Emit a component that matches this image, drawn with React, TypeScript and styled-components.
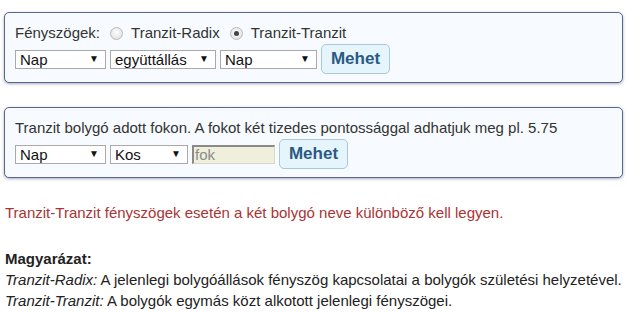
import styled, { createGlobalStyle } from "styled-components";

const GlobalStyle = createGlobalStyle`
  html, body {
    margin: 0;
    padding: 0;
    background: #ffffff;
  }
  body {
    font-family: "Liberation Sans", Arial, sans-serif;
    font-size: 15px;
    color: #222;
  }
`;

const Page = styled.div`
  width: 628px;
  padding: 12px 5px 0 4px;
  box-sizing: border-box;
`;

const Panel = styled.form`
  background: #f7fbff;
  border: 1px solid #5a6590;
  border-radius: 5px;
  box-shadow: 0 1px 3px rgba(60, 70, 120, 0.45);
  padding: 10px 10px 8px 10px;
  margin: 0 0 24px 0;
  display: flex;
  flex-direction: column;
  gap: 1px;
  font-size: 15px;
  color: #333;
`;

const TopLine = styled.div`
  display: flex;
  align-items: center;
  height: 20px;
  line-height: 20px;
  white-space: nowrap;
`;

const RadioLabel = styled.label`
  display: flex;
  align-items: center;
  margin-left: 10px;
`;

const Radio = styled.span<{ $checked?: boolean }>`
  width: 11px;
  height: 11px;
  border-radius: 50%;
  border: 1px solid #b8b8b8;
  background: radial-gradient(circle at 50% 40%, #fdfdfd 0%, #dcdcdc 100%);
  margin-right: 8px;
  display: flex;
  align-items: center;
  justify-content: center;
  &::after {
    content: "";
    width: 5px;
    height: 5px;
    border-radius: 50%;
    background: ${(p) => (p.$checked ? "#444" : "transparent")};
  }
`;

const Controls = styled.div`
  display: flex;
  align-items: center;
  gap: 4px;
  height: 30px;
`;

const SelectWrap = styled.div<{ $w: number }>`
  position: relative;
  width: ${(p) => p.$w}px;
  height: 19px;
`;

const Select = styled.select`
  appearance: none;
  -webkit-appearance: none;
  width: 100%;
  height: 100%;
  box-sizing: border-box;
  border: 1px solid #a9a9a9;
  background: #fff;
  font-family: "Liberation Sans", Arial, sans-serif;
  font-size: 15px;
  line-height: 17px;
  color: #111;
  padding: 0 0 0 4px;
  margin: 0;
  border-radius: 0;
  outline: none;
`;

const Arrow = styled.span`
  position: absolute;
  right: 7px;
  top: 3px;
  font-size: 10px;
  line-height: 12px;
  color: #111;
  pointer-events: none;
`;

const FokInput = styled.input`
  width: 83px;
  height: 19px;
  box-sizing: border-box;
  border: 1px solid #d8d8c8;
  border-top: 2px solid #8a8a8a;
  border-left: 2px solid #8a8a8a;
  background: #efefdc;
  font-family: "Liberation Sans", Arial, sans-serif;
  font-size: 15px;
  padding: 0 1px;
  margin: 0;
  &::placeholder {
    color: #8a8a8a;
  }
`;

const Button = styled.button`
  height: 30px;
  width: 69px;
  border: 1px solid #a6c9dc;
  border-radius: 5px;
  background: #e6f4fb;
  color: #2a5a85;
  font-family: "Liberation Sans", Arial, sans-serif;
  font-weight: bold;
  font-size: 17px;
  padding: 0;
`;

const ErrorText = styled.p`
  margin: 0 0 0 1px;
  color: #a93434;
  font-size: 15px;
  line-height: 21px;
  padding-top: 0;
`;

const Explain = styled.div`
  margin: 25px 0 0 1px;
  font-size: 15px;
  line-height: 21px;
  color: #222;
`;

const ExplainTitle = styled.div`
  font-weight: bold;
`;

const Term = styled.i``;

type SelProps = { w: number; value: string; options: string[] };

const Sel = ({ w, value, options }: SelProps) => (
  <SelectWrap $w={w}>
    <Select defaultValue={value}>
      {options.map((o) => (
        <option key={o}>{o}</option>
      ))}
    </Select>
    <Arrow>▼</Arrow>
  </SelectWrap>
);

const planets = ["Nap", "Hold", "Merkúr", "Vénusz", "Mars", "Jupiter", "Szaturnusz", "Uránusz", "Neptunusz", "Plútó"];
const aspects = ["együttállás", "szembenállás", "trigon", "kvadrát", "szextil"];
const signs = ["Kos", "Bika", "Ikrek", "Rák", "Oroszlán", "Szűz", "Mérleg", "Skorpió", "Nyilas", "Bak", "Vízöntő", "Halak"];

export default function App() {
  return (
    <Page>
      <GlobalStyle />
      <Panel>
        <TopLine>
          Fényszögek:
          <RadioLabel>
            <Radio />
            Tranzit-Radix
          </RadioLabel>
          <RadioLabel>
            <Radio $checked />
            Tranzit-Tranzit
          </RadioLabel>
        </TopLine>
        <Controls>
          <Sel w={91} value="Nap" options={planets} />
          <Sel w={106} value="együttállás" options={aspects} />
          <Sel w={97} value="Nap" options={planets} />
          <Button type="button">Mehet</Button>
        </Controls>
      </Panel>
      <Panel>
        <TopLine>Tranzit bolygó adott fokon. A fokot két tizedes pontossággal adhatjuk meg pl. 5.75</TopLine>
        <Controls>
          <Sel w={91} value="Nap" options={planets} />
          <Sel w={78} value="Kos" options={signs} />
          <FokInput placeholder="fok" />
          <Button type="button">Mehet</Button>
        </Controls>
      </Panel>
      <ErrorText>Tranzit-Tranzit fényszögek esetén a két bolygó neve különböző kell legyen.</ErrorText>
      <Explain>
        <ExplainTitle>Magyarázat:</ExplainTitle>
        <div>
          <Term>Tranzit-Radix:</Term> A jelenlegi bolygóállások fényszög kapcsolatai a bolygók születési helyzetével.
        </div>
        <div>
          <Term>Tranzit-Tranzit:</Term> A bolygók egymás közt alkotott jelenlegi fényszögei.
        </div>
      </Explain>
    </Page>
  );
}
